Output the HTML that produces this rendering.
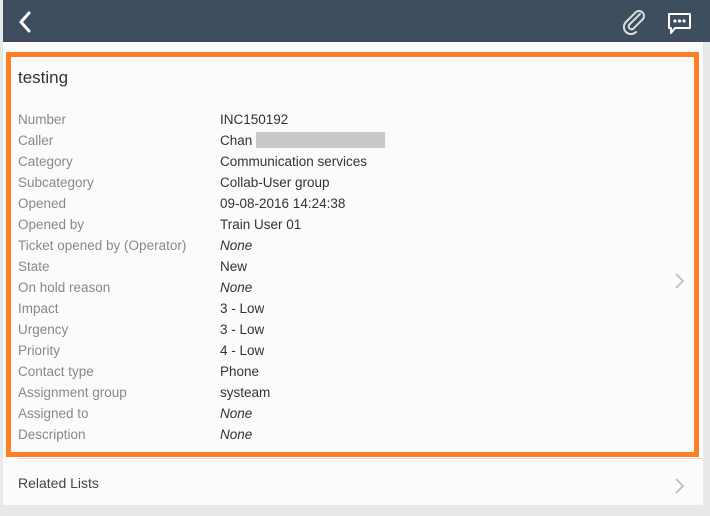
<!DOCTYPE html>
<html><head><style>
*{margin:0;padding:0;box-sizing:border-box}
body{width:710px;height:516px;background:#e8e9ea;font-family:"Liberation Sans",sans-serif;position:relative;overflow:hidden}
.hdr{position:absolute;left:3px;top:0;width:707px;height:42px;background:#3f4e5f}
.card{position:absolute;left:3px;top:42px;width:700px;height:463px;background:#fbfbfb}
.box{position:absolute;left:6px;top:52px;width:693px;height:405px;border:5px solid #ff7f24}
.title{position:absolute;left:18px;top:68px;font-size:17px;color:#333}
.row{position:absolute;left:18px;font-size:13.5px;height:21px;line-height:21px;width:600px}
.row .l{position:absolute;left:0;color:#888}
.row .v{position:absolute;left:202px;color:#333}
.row .v i{color:#333}
.sep{position:absolute;left:18px;top:458px;width:685px;height:1px;background:#ddd}
.rl{position:absolute;left:18px;top:475px;font-size:14px;color:#444}
</style></head><body>
<div class="hdr">
<svg style="position:absolute;left:15px;top:11px" width="14" height="22"><path d="M11 2 L3 11 L11 20" stroke="#fff" stroke-width="3" fill="none" stroke-linecap="round" stroke-linejoin="round"/></svg>
<svg style="position:absolute;left:618px;top:9px" width="26" height="26" viewBox="0 0 26 26"><path d="M19 5 L8 16 a3 3 0 0 0 4 4 L22 10 a5 5 0 0 0 -7 -7 L5 13 a7 7 0 0 0 10 10" stroke="#ddd" stroke-width="2" fill="none" stroke-linecap="round"/></svg>
<svg style="position:absolute;left:664px;top:12px" width="26" height="24" viewBox="0 0 26 24"><path d="M2 2 H23 V16 H8 L4 21 V16 H2 Z" stroke="#fff" stroke-width="2" fill="none" stroke-linejoin="round"/><circle cx="8" cy="9" r="1.6" fill="#fff"/><circle cx="12.5" cy="9" r="1.6" fill="#fff"/><circle cx="17" cy="9" r="1.6" fill="#fff"/></svg>
</div>
<div class="card"></div>
<div class="box"></div>
<div class="title">testing</div>
<div class="row" style="top:109px"><span class="l">Number</span><span class="v">INC150192</span></div>
<div class="row" style="top:130px"><span class="l">Caller</span><span class="v">Chan</span></div>
<div style="position:absolute;left:256px;top:132px;width:129px;height:16px;background:#c8c8c8"></div>
<div class="row" style="top:151px"><span class="l">Category</span><span class="v">Communication services</span></div>
<div class="row" style="top:172px"><span class="l">Subcategory</span><span class="v">Collab-User group</span></div>
<div class="row" style="top:193px"><span class="l">Opened</span><span class="v">09-08-2016 14:24:38</span></div>
<div class="row" style="top:214px"><span class="l">Opened by</span><span class="v">Train User 01</span></div>
<div class="row" style="top:235px"><span class="l">Ticket opened by (Operator)</span><span class="v"><i>None</i></span></div>
<div class="row" style="top:256px"><span class="l">State</span><span class="v">New</span></div>
<div class="row" style="top:277px"><span class="l">On hold reason</span><span class="v"><i>None</i></span></div>
<div class="row" style="top:298px"><span class="l">Impact</span><span class="v">3 - Low</span></div>
<div class="row" style="top:319px"><span class="l">Urgency</span><span class="v">3 - Low</span></div>
<div class="row" style="top:340px"><span class="l">Priority</span><span class="v">4 - Low</span></div>
<div class="row" style="top:361px"><span class="l">Contact type</span><span class="v">Phone</span></div>
<div class="row" style="top:382px"><span class="l">Assignment group</span><span class="v">systeam</span></div>
<div class="row" style="top:403px"><span class="l">Assigned to</span><span class="v"><i>None</i></span></div>
<div class="row" style="top:424px"><span class="l">Description</span><span class="v"><i>None</i></span></div>
<svg style="position:absolute;left:674px;top:272px" width="12" height="18"><path d="M2 2 L9 9 L2 16" stroke="#bbb" stroke-width="1.6" fill="none"/></svg>
<div class="sep"></div>
<div class="rl">Related Lists</div>
<svg style="position:absolute;left:674px;top:477px" width="12" height="18"><path d="M2 2 L9 9 L2 16" stroke="#bbb" stroke-width="1.6" fill="none"/></svg>
</body></html>
